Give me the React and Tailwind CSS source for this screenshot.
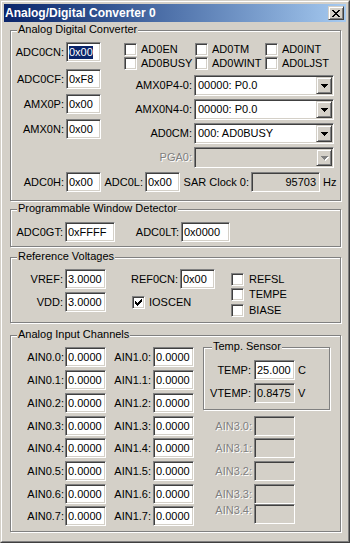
const sunken =
  'border border-t-[#808080] border-l-[#808080] border-r-white border-b-white shadow-[inset_1px_1px_0_#404040,inset_-1px_-1px_0_#d4d0c8]';
const raised =
  'border border-t-[#d4d0c8] border-l-[#d4d0c8] border-r-[#404040] border-b-[#404040] shadow-[inset_1px_1px_0_#fff,inset_-1px_-1px_0_#808080] bg-[#d4d0c8]';
const dim = 'text-[#808080] [text-shadow:1px_1px_0_#fff]';

function Edit({ w, v = '', gray, right, sel }) {
  return (
    <div
      className={`${w} h-[20px] shrink-0 flex items-center ${sunken} ${right ? 'justify-end pr-[3px]' : 'pl-[2px]'} ${gray ? 'bg-[#d4d0c8]' : 'bg-white'}`}
    >
      {sel ? <span className="bg-[#0a246a] text-white">{v}</span> : v}
    </div>
  );
}

function Lbl({ w, off, className = '', children }) {
  return <span className={`${w} shrink-0 text-right whitespace-nowrap ${off ? dim : ''} ${className}`}>{children}</span>;
}

function Field({ label, lw, gap = 'ml-[2px]', off, className = '', ...edit }) {
  return (
    <div className={`flex items-center ${className}`}>
      <Lbl w={lw} off={off}>{label}</Lbl>
      <div className={gap}>
        <Edit {...edit} />
      </div>
    </div>
  );
}

function Check({ label, w = '', checked, gap = 'ml-[4px]', className = '' }) {
  return (
    <div className={`${w} flex items-center h-[13px] ${className}`}>
      <div className={`w-[13px] h-[13px] shrink-0 p-[1px] bg-white ${sunken}`}>
        {checked && (
          <svg width="9" height="9" viewBox="0 0 9 9" shapeRendering="crispEdges">
            <path
              fill="#000"
              d="M1 3h1v3H1z M2 4h1v3H2z M3 5h1v3H3z M4 4h1v3H4z M5 3h1v3H5z M6 2h1v3H6z M7 1h1v3H7z"
            />
          </svg>
        )}
      </div>
      <span className={`${gap} whitespace-nowrap`}>{label}</span>
    </div>
  );
}

function Arrow({ off }) {
  const d = 'M0 0h7v1H0z M1 1h5v1H1z M2 2h3v1H2z M3 3h1v1H3z';
  return (
    <svg width="8" height="5" viewBox="0 0 8 5" shapeRendering="crispEdges">
      {off && <path fill="#fff" transform="translate(1 1)" d={d} />}
      <path fill={off ? '#808080' : '#000'} d={d} />
    </svg>
  );
}

function Combo({ label, v = '', off, className = '' }) {
  return (
    <div className={`flex items-center ${className}`}>
      <Lbl w="w-[68px]" off={off}>{label}</Lbl>
      <div className={`ml-[2px] w-[140px] h-[21px] flex items-center p-[1px] ${sunken} ${off ? 'bg-[#d4d0c8]' : 'bg-white'}`}>
        <span className="flex-1 pl-[2px] whitespace-nowrap">{v}</span>
        <div className={`w-[16px] h-[17px] flex items-center justify-center pl-[1px] pt-[1px] ${raised}`}>
          <Arrow off={off} />
        </div>
      </div>
    </div>
  );
}

function Group({ title, className = '', lx = 'left-[6px]', children }) {
  return (
    <div className={`relative shrink-0 border border-[#808080] shadow-[inset_1px_1px_0_#fff,1px_1px_0_#fff] ${className}`}>
      <span className={`absolute top-[-8px] ${lx} px-[1px] bg-[#d4d0c8] whitespace-nowrap`}>{title}</span>
      {children}
    </div>
  );
}

const ain0 = [0, 1, 2, 3, 4, 5, 6, 7];
const rowGap = ['', 'mt-[3px]', 'mt-[3px]', 'mt-[3px]', 'mt-[2px]', 'mt-[3px]', 'mt-[3px]', 'mt-[2px]'];

export default function App() {
  return (
    <div className="w-[350px] h-[543px] bg-[#d4d0c8] border border-t-[#d4d0c8] border-l-[#d4d0c8] border-r-[#404040] border-b-[#404040] text-[11px] leading-[13px] text-black font-['Liberation_Sans',Arial,sans-serif]">
      <div className="h-full flex flex-col p-[2px] border border-t-white border-l-white border-r-[#808080] border-b-[#808080]">
        {/* caption */}
        <div className="h-[18px] shrink-0 flex items-center justify-between bg-linear-to-r from-[#0a246a] to-[#a6caf0] pl-[1px] pr-[2px]">
          <span className="text-white font-bold text-[12px] leading-[14px] -mt-[1px]">Analog/Digital Converter 0</span>
          <div className={`w-[16px] h-[14px] flex items-center justify-center pt-[1px] ${raised}`}>
            <svg width="8" height="7" viewBox="0 0 8 7" shapeRendering="crispEdges">
              <path
                fill="#000"
                d="M0 0h2v1H0z M6 0h2v1H6z M1 1h2v1H1z M5 1h2v1H5z M2 2h4v1H2z M3 3h2v1H3z M2 4h4v1H2z M1 5h2v1H1z M5 5h2v1H5z M0 6h2v1H0z M6 6h2v1H6z"
              />
            </svg>
          </div>
        </div>

        <div className="flex flex-col pl-[6px]">
          {/* ADC */}
          <Group title="Analog Digital Converter" className="mt-[8px] w-[331px] h-[171px]">
            <div className="flex pt-[11px]">
              <div className="w-[90px] flex flex-col">
                <Field label="ADC0CN:" lw="w-[53px]" w="w-[35px]" v="0x00" sel />
                <Field label="ADC0CF:" lw="w-[53px]" w="w-[35px]" v="0xF8" className="mt-[7px]" />
                <Field label="AMX0P:" lw="w-[53px]" w="w-[35px]" v="0x00" className="mt-[5px]" />
                <Field label="AMX0N:" lw="w-[53px]" w="w-[35px]" v="0x00" className="mt-[5px]" />
              </div>
              <div className="ml-[23px] flex flex-col pt-[1px]">
                <div className="flex">
                  <Check label="AD0EN" w="w-[71px]" />
                  <Check label="AD0TM" w="w-[70px]" />
                  <Check label="AD0INT" />
                </div>
                <div className="flex mt-[1px]">
                  <Check label="AD0BUSY" w="w-[71px]" />
                  <Check label="AD0WINT" w="w-[70px]" />
                  <Check label="AD0LJST" />
                </div>
                <Combo label="AMX0P4-0:" v="00000: P0.0" className="mt-[5px]" />
                <Combo label="AMX0N4-0:" v="00000: P0.0" className="mt-[3px]" />
                <Combo label="AD0CM:" v="000: AD0BUSY" className="mt-[3px]" />
                <Combo label="PGA0:" off className="mt-[3px]" />
              </div>
            </div>
            <div className="flex items-center mt-[4px]">
              <Field label="ADC0H:" lw="w-[53px]" w="w-[35px]" v="0x00" />
              <Field label="ADC0L:" lw="w-[42px]" w="w-[35px]" v="0x00" />
              <Field label="SAR Clock 0:" lw="w-[69px]" w="w-[69px]" v="95703" gray right />
              <span className="ml-[3px]">Hz</span>
            </div>
          </Group>

          {/* window detector */}
          <Group title="Programmable Window Detector" className="mt-[8px] w-[331px] h-[38px]">
            <div className="flex pt-[12px]">
              <Field label="ADC0GT:" lw="w-[52px]" w="w-[50px]" v="0xFFFF" />
              <Field label="ADC0LT:" lw="w-[64px]" w="w-[49px]" v="0x0000" />
            </div>
          </Group>

          {/* reference */}
          <Group title="Reference Voltages" className="mt-[10px] w-[331px] h-[66px]">
            <div className="flex pt-[11px]">
              <div className="flex flex-col">
                <Field label="VREF:" lw="w-[52px]" w="w-[41px]" v="3.0000" />
                <Field label="VDD:" lw="w-[52px]" w="w-[41px]" v="3.0000" className="mt-[3px]" />
              </div>
              <div className="flex flex-col">
                <Field label="REF0CN:" lw="w-[72px]" w="w-[35px]" v="0x00" />
                <Check label="IOSCEN" checked className="ml-[26px] mt-[7px]" />
              </div>
              <div className="flex flex-col ml-[16px] pt-[4px]">
                <Check label="REFSL" gap="ml-[5px]" />
                <Check label="TEMPE" gap="ml-[5px]" className="mt-[2px]" />
                <Check label="BIASE" gap="ml-[5px]" className="mt-[3px]" />
              </div>
            </div>
          </Group>

          {/* inputs */}
          <Group title="Analog Input Channels" className="mt-[12px] w-[331px] h-[197px]">
            <div className="flex pt-[11px]">
              <div className="flex flex-col">
                {ain0.map((i) => (
                  <Field key={i} label={`AIN0.${i}:`} lw="w-[53px]" gap="ml-[1px]" w="w-[41px]" v="0.0000" className={rowGap[i]} />
                ))}
              </div>
              <div className="flex flex-col">
                {ain0.map((i) => (
                  <Field key={i} label={`AIN1.${i}:`} lw="w-[45px]" w="w-[41px]" v="0.0000" className={rowGap[i]} />
                ))}
              </div>
              <div className="flex flex-col">
                <Group title="Temp. Sensor" lx="left-[8px]" className="ml-[9px] w-[127px] h-[63px]">
                  <div className="flex flex-col pt-[12px]">
                    <div className="flex items-center">
                      <Field label="TEMP:" lw="w-[47px]" gap="ml-[3px]" w="w-[41px]" v="25.000" />
                      <span className="ml-[3px]">C</span>
                    </div>
                    <div className="flex items-center mt-[3px]">
                      <Field label="VTEMP:" lw="w-[47px]" gap="ml-[3px]" w="w-[41px]" v="0.8475" gray />
                      <span className="ml-[3px]">V</span>
                    </div>
                  </div>
                </Group>
                <Field label="AIN3.0:" lw="w-[58px]" w="w-[41px]" off gray className="mt-[6px]" />
                <Field label="AIN3.1:" lw="w-[58px]" w="w-[41px]" off gray className="mt-[2px]" />
                <Field label="AIN3.2:" lw="w-[58px]" w="w-[41px]" off gray className="mt-[3px]" />
                <Field label="AIN3.3:" lw="w-[58px]" w="w-[41px]" off gray className="mt-[3px]" />
                <div className="flex items-start">
                  <Lbl w="w-[58px]" off>AIN3.4:</Lbl>
                  <div className="ml-[2px]">
                    <Edit w="w-[41px]" gray />
                  </div>
                </div>
              </div>
            </div>
          </Group>
        </div>
      </div>
    </div>
  );
}
